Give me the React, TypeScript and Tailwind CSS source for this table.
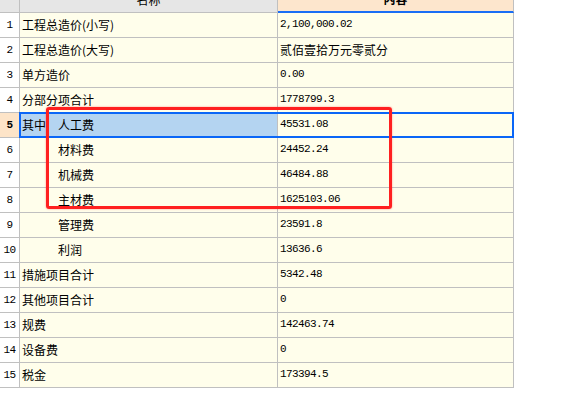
import React from "react";

type Row = { n: string; lead: string; sub?: string; val: string; cjkVal?: boolean; sel?: boolean };

const rows: Row[] = [
  { n: "1", lead: "工程总造价(小写)", val: "2,100,000.02" },
  { n: "2", lead: "工程总造价(大写)", val: "贰佰壹拾万元零贰分", cjkVal: true },
  { n: "3", lead: "单方造价", val: "0.00" },
  { n: "4", lead: "分部分项合计", val: "1778799.3" },
  { n: "5", lead: "其中", sub: "人工费", val: "45531.08", sel: true },
  { n: "6", lead: "", sub: "材料费", val: "24452.24" },
  { n: "7", lead: "", sub: "机械费", val: "46484.88" },
  { n: "8", lead: "", sub: "主材费", val: "1625103.06" },
  { n: "9", lead: "", sub: "管理费", val: "23591.8" },
  { n: "10", lead: "", sub: "利润", val: "13636.6" },
  { n: "11", lead: "措施项目合计", val: "5342.48" },
  { n: "12", lead: "其他项目合计", val: "0" },
  { n: "13", lead: "规费", val: "142463.74" },
  { n: "14", lead: "设备费", val: "0" },
  { n: "15", lead: "税金", val: "173394.5" },
];

const cjk = "font-['Noto_Sans_CJK_SC',sans-serif] text-[12px]";
const mono = "font-['Liberation_Mono','Noto_Sans_CJK_SC',monospace] text-[11px] tracking-[-0.6px]";

export default function App() {
  return (
    <div className="relative w-[582px] h-[394px] overflow-hidden bg-white text-black">
      <div className="mt-[-13px] w-[514px] flex flex-col">
        {/* header */}
        <div className="flex h-[26px]">
          <div className="w-[20px] h-[26px] shrink-0 bg-[#e6e6e6] border-r border-b border-[#c0c0c0]" />
          <div className={`w-[258px] h-[26px] shrink-0 bg-[#e6e6e6] border-r border-b border-[#c0c0c0] flex items-center justify-center leading-none ${cjk}`}>
            名称
          </div>
          <div className={`w-[236px] h-[26px] shrink-0 bg-[#fde6cd] border-r border-r-[#c0c0c0] border-b-2 border-b-[#1a6ef5] flex items-center justify-center leading-none font-bold ${cjk}`}>
            内容
          </div>
        </div>
        {rows.map((r) => (
          <div key={r.n} className="flex h-[25px]">
            <div
              className={`w-[20px] h-[25px] shrink-0 border-r border-b border-[#c0c0c0] flex items-center justify-center leading-none font-['Liberation_Mono',monospace] text-[11px] tracking-[-0.6px] ${
                r.sel ? "bg-[#fde4c8] font-bold" : "bg-white"
              }`}
            >
              {r.n}
            </div>
            <div
              className={`w-[258px] h-[25px] shrink-0 border-r border-b border-[#c0c0c0] flex items-center pl-[2px] pb-[1px] leading-none ${cjk} ${
                r.sel ? "bg-[#b4d4f1]" : "bg-[#fffeeb]"
              }`}
            >
              {r.sub !== undefined ? (
                <>
                  <span className="w-[36px] shrink-0">{r.lead}</span>
                  <span>{r.sub}</span>
                </>
              ) : (
                <span>{r.lead}</span>
              )}
            </div>
            <div
              className={`w-[236px] h-[25px] shrink-0 border-r border-b border-[#c0c0c0] bg-[#fffeeb] flex items-center pl-[2px] pb-[1px] leading-none ${
                r.cjkVal ? cjk : mono
              }`}
            >
              {r.val}
            </div>
          </div>
        ))}
      </div>
      {/* selection outline */}
      <div className="absolute left-[19px] top-[112px] w-[495px] h-[26px] border-2 border-[#0a66f7] pointer-events-none" />
      {/* red annotation rectangle */}
      <div className="absolute left-[46px] top-[107px] w-[346px] h-[102px] border-[3px] border-[#ff2020] rounded-[3px] shadow-[0_0_2px_rgba(255,0,0,0.45)] pointer-events-none" />
    </div>
  );
}
